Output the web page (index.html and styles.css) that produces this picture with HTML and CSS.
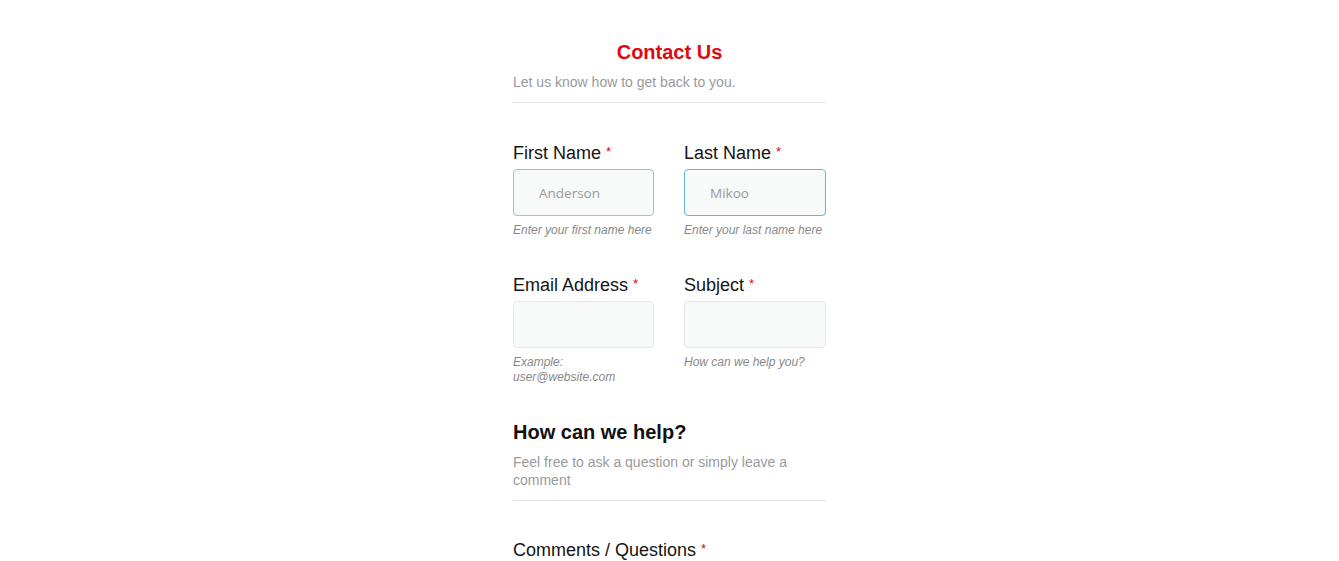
FILE: index.html
```html
<!DOCTYPE html>
<html lang="en">
<head>
<meta charset="utf-8">
<title>Contact Us</title>
<link rel="stylesheet" href="styles.css">
</head>
<body>
<form class="form">
  <div class="section-head">
    <h1 class="title">Contact Us</h1>
    <p class="subtitle">Let us know how to get back to you.</p>
  </div>
  <div class="fields">
    <div class="field">
      <label class="label">First Name <span class="req">*</span></label>
      <div class="input input-hint">Anderson</div>
      <div class="helper">Enter your first name here</div>
    </div>
    <div class="field">
      <label class="label">Last Name <span class="req">*</span></label>
      <div class="input input-focus">Mikoo</div>
      <div class="helper">Enter your last name here</div>
    </div>
    <div class="field">
      <label class="label">Email Address <span class="req">*</span></label>
      <div class="input"></div>
      <div class="helper">Example: user@website.com</div>
    </div>
    <div class="field">
      <label class="label">Subject <span class="req">*</span></label>
      <div class="input"></div>
      <div class="helper">How can we help you?</div>
    </div>
  </div>
  <div class="section-head section-help">
    <h2 class="heading">How can we help?</h2>
    <p class="subtitle">Feel free to ask a question or simply leave a comment</p>
  </div>
  <div class="field field-comments">
    <label class="label">Comments / Questions <span class="req">*</span></label>
  </div>
</form>
</body>
</html>
```
FILE: styles.css
```css
* { box-sizing: border-box; }

body {
  margin: 0;
  background: #fff;
  font-family: "Liberation Sans", Arial, sans-serif;
  color: #111;
}

.form {
  width: 313px;
  margin: 0 auto;
  padding-top: 40px;
}

.section-head {
  border-bottom: 1px solid #e4e4e4;
  padding-bottom: 11px;
}

.title {
  margin: 0;
  font-size: 20px;
  line-height: 24px;
  font-weight: bold;
  color: #e3070f;
  text-align: center;
}

.subtitle {
  margin: 9px 0 0;
  font-size: 14px;
  line-height: 18px;
  color: #9a9a9a;
}

.fields {
  display: grid;
  grid-template-columns: 141px 142px;
  column-gap: 30px;
  row-gap: 35px;
  margin-top: 38px;
}

.field {
  display: flex;
  flex-direction: column;
  min-width: 0;
}

.label {
  font-size: 18px;
  line-height: 22px;
  padding-top: 1px;
  color: #141414;
}

.req {
  color: #e3070f;
  font-size: 13px;
  line-height: 0;
  vertical-align: 3px;
}

.input {
  margin-top: 5px;
  height: 47px;
  border: 1px solid #e6e8e8;
  border-radius: 4px;
  background: #f8f9f9;
  padding: 0 25px;
  display: flex;
  align-items: center;
  font-family: "Open Sans", "Noto Sans", sans-serif;
  font-size: 13.5px;
  color: #9a9a9a;
}

.input-hint {
  border-color: #8fc6e8;
}

.input-focus {
  border-color: #5fb8dc;
}

.helper {
  margin-top: 7px;
  font-size: 12px;
  line-height: 15px;
  font-style: italic;
  color: #888;
}

.section-help {
  margin-top: 35px;
}

.heading {
  margin: 0;
  font-size: 20px;
  line-height: 24px;
  font-weight: bold;
  color: #111;
}

.field-comments {
  margin-top: 37px;
}
```
